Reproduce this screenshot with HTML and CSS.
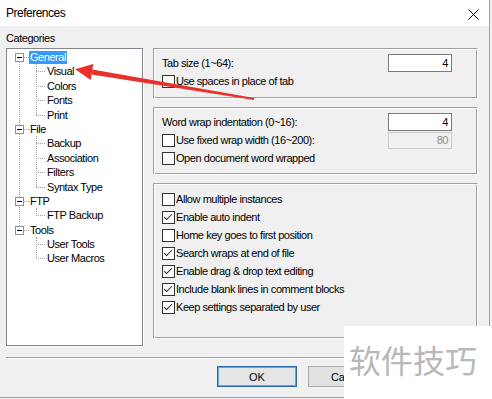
FILE: index.html
```html
<!DOCTYPE html>
<html>
  <head>
    <meta name="viewport" content="width=device-width, initial-scale=1" />
    <link rel="stylesheet" href="styles.css">
  </head>
  <body>
    <div class="screen">
      <div class="window">
        <div class="titlebar">
          <span class="title">Preferences</span>
          <svg class="close" width="11" height="11" viewBox="0 0 11 11">
            <path d="M0.5 0.5 L10.5 10.5 M10.5 0.5 L0.5 10.5" stroke="#000" stroke-width="1" fill="none" />
          </svg>
        </div>

        <div class="content">
          <div class="caption">Categories</div>

          <div class="main">
            <ul class="tree">
              <li class="root">
                <div class="node"><span class="toggle"></span><span class="label selected">General</span></div>
                <ul class="children">
                  <li>Visual</li>
                  <li>Colors</li>
                  <li>Fonts</li>
                  <li>Print</li>
                </ul>
              </li>
              <li class="root">
                <div class="node"><span class="toggle"></span><span class="label">File</span></div>
                <ul class="children">
                  <li>Backup</li>
                  <li>Association</li>
                  <li>Filters</li>
                  <li>Syntax Type</li>
                </ul>
              </li>
              <li class="root">
                <div class="node"><span class="toggle"></span><span class="label">FTP</span></div>
                <ul class="children">
                  <li>FTP Backup</li>
                </ul>
              </li>
              <li class="root">
                <div class="node"><span class="toggle"></span><span class="label">Tools</span></div>
                <ul class="children">
                  <li>User Tools</li>
                  <li>User Macros</li>
                </ul>
              </li>
            </ul>

            <div class="panels">
              <div class="group group-tab">
                <div class="row"><span>Tab size (1~64):</span><span class="field">4</span></div>
                <div class="row"><span class="cb"></span>Use spaces in place of tab</div>
              </div>

              <div class="group group-wrap">
                <div class="row"><span>Word wrap indentation (0~16):</span><span class="field">4</span></div>
                <div class="row"><span class="cb"></span>Use fixed wrap width (16~200):<span class="field disabled">80</span></div>
                <div class="row"><span class="cb"></span>Open document word wrapped</div>
              </div>

              <div class="group group-misc">
                <div class="row"><span class="cb"></span>Allow multiple instances</div>
                <div class="row"><span class="cb on"></span>Enable auto indent</div>
                <div class="row"><span class="cb"></span>Home key goes to first position</div>
                <div class="row"><span class="cb on"></span>Search wraps at end of file</div>
                <div class="row"><span class="cb on"></span>Enable drag &amp; drop text editing</div>
                <div class="row"><span class="cb on"></span>Include blank lines in comment blocks</div>
                <div class="row"><span class="cb on"></span>Keep settings separated by user</div>
              </div>
            </div>
          </div>

          <div class="separator"></div>

          <div class="buttons">
            <button class="btn default">OK</button>
            <button class="btn">Cancel</button>
          </div>
        </div>
      </div>

      <!-- красная стрелка поверх окна -->
      <svg class="arrow" width="492" height="399" viewBox="0 0 492 399">
        <polygon points="254.2,98 253.8,100 91.6,74.5 92.4,69.5" fill="#e8312a" />
        <polygon points="75.2,69.2 93.3,64.1 90.7,79.9" fill="#e8312a" />
      </svg>

      <div class="watermark">软件技巧</div>
    </div>
  </body>
</html>
```

FILE: styles.css
```css
/* Основа страницы */
body {
  margin: 0;
  background: #f0f0f0;
  font-family: "Liberation Sans", Arial, sans-serif;
  font-size: 11px;
  letter-spacing: -0.45px;
  color: #000;
}

.screen {
  position: relative;
  width: 492px;
  height: 399px;
  overflow: hidden;
}

.window {
  width: 489px;
  height: 397px;
  background: #f0f0f0;
  border-right: 1px solid #7ea7cd;
  border-bottom: 1px solid #7ea7cd;
}

/* Заголовок окна */
.titlebar {
  height: 26px;
  background: #fff;
  display: flex;
  align-items: center;
  justify-content: space-between;
  padding: 0 10px 0 6px;
}

.title {
  font-size: 12px;
  letter-spacing: -0.5px;
}

.close {
  margin-top: 2px;
}

.content {
  padding: 0 10px 0 6px;
}

.caption {
  padding-top: 5px;
  line-height: 14px;
  margin-bottom: 3px;
}

.main {
  display: flex;
  gap: 10px;
  height: 298px;
}

/* Дерево категорий */
.tree {
  list-style: none;
  margin: 0;
  padding: 1px 0 0;
  width: 137px;
  height: 298px;
  box-sizing: border-box;
  border: 1px solid #828790;
  box-shadow: 1px 1px 0 #fff;
  background: #fff;
  flex: none;
}

.root {
  position: relative;
}

.root::before {
  content: "";
  position: absolute;
  left: 12px;
  top: 7px;
  bottom: -7px;
  border-left: 1px dotted #a0a0a0;
}

.root:last-child::before {
  display: none;
}

.node {
  position: relative;
  height: 14.4px;
  line-height: 14.4px;
  padding-left: 22px;
}

.node::before {
  content: "";
  position: absolute;
  left: 17px;
  top: 7px;
  width: 5px;
  border-top: 1px dotted #a0a0a0;
}

.toggle {
  position: absolute;
  left: 8px;
  top: 3px;
  width: 7px;
  height: 7px;
  border: 1px solid #919191;
  background: #fff;
  z-index: 1;
}

.toggle::after {
  content: "";
  position: absolute;
  left: 1px;
  top: 3px;
  width: 5px;
  height: 1px;
  background: #000;
}

.label {
  display: inline-block;
  padding: 0 1px;
  line-height: 13px;
}

.label.selected {
  background: #3399ff;
  color: #fff;
}

.children {
  list-style: none;
  margin: 0;
  padding: 0;
  position: relative;
}

.children::before {
  content: "";
  position: absolute;
  left: 29px;
  top: 0;
  bottom: 7px;
  border-left: 1px dotted #a0a0a0;
}

.children li {
  position: relative;
  height: 14.4px;
  line-height: 14.4px;
  padding-left: 40px;
}

.children li::before {
  content: "";
  position: absolute;
  left: 29px;
  top: 7px;
  width: 9px;
  border-top: 1px dotted #a0a0a0;
}

/* Панели настроек */
.panels {
  display: flex;
  flex-direction: column;
  gap: 8px;
  width: 325px;
  flex: none;
}

.group {
  border: 1px solid;
  border-color: #a0a0a0 #fff #fff #a0a0a0;
  box-shadow: inset 1px 1px 0 #fff, inset -1px -1px 0 #a0a0a0;
  padding: 5px 25px 8px 8px;
}

.group-wrap {
  padding-bottom: 7px;
}

.group-misc {
  padding-top: 6px;
  padding-bottom: 22px;
}

.row {
  display: flex;
  align-items: center;
  height: 18px;
  white-space: nowrap;
}

.field {
  margin-left: auto;
  width: 64px;
  height: 18px;
  box-sizing: border-box;
  border: 1px solid #7a7a7a;
  background: #fff;
  text-align: right;
  padding-right: 3px;
  line-height: 16px;
}

.field.disabled {
  height: 17px;
  margin-top: 1px;
  border-color: #cccccc;
  background: #f0f0f0;
  color: #8d8d8d;
  line-height: 15px;
}

.cb {
  position: relative;
  width: 13px;
  height: 13px;
  box-sizing: border-box;
  border: 1px solid #333;
  background: #fff;
  margin-right: 1px;
  flex: none;
}

.cb.on::after {
  content: "";
  position: absolute;
  left: 3px;
  top: 0;
  width: 3px;
  height: 7px;
  border: solid #222;
  border-width: 0 1px 1px 0;
  transform: rotate(45deg);
}

/* Кнопки внизу */
.separator {
  margin-top: 11px;
  width: 472px;
  border-top: 1px solid #a0a0a0;
  border-bottom: 1px solid #fff;
}

.buttons {
  display: flex;
  justify-content: flex-end;
  gap: 11px;
  margin-top: 7px;
  padding-right: 91px;
}

.btn {
  width: 80px;
  height: 21px;
  border: 1px solid #adadad;
  background: #e1e1e1;
  font-family: "Liberation Sans", Arial, sans-serif;
  font-size: 11px;
  color: #000;
  padding: 0;
}

.btn.default {
  border-color: #2a6bb0;
  box-shadow: inset 0 0 0 1px #6aa3d8;
  background: #e5e5e5;
}

/* Слои поверх окна */
.arrow {
  position: absolute;
  left: 0;
  top: 0;
  pointer-events: none;
}

.watermark {
  position: absolute;
  left: 344px;
  top: 326px;
  right: 0;
  bottom: 0;
  background: #fff;
  color: #b8b8b8;
  font-family: "Noto Sans CJK SC", sans-serif;
  font-size: 32px;
  letter-spacing: 0;
  line-height: 66px;
  padding-left: 5px;
}
```
